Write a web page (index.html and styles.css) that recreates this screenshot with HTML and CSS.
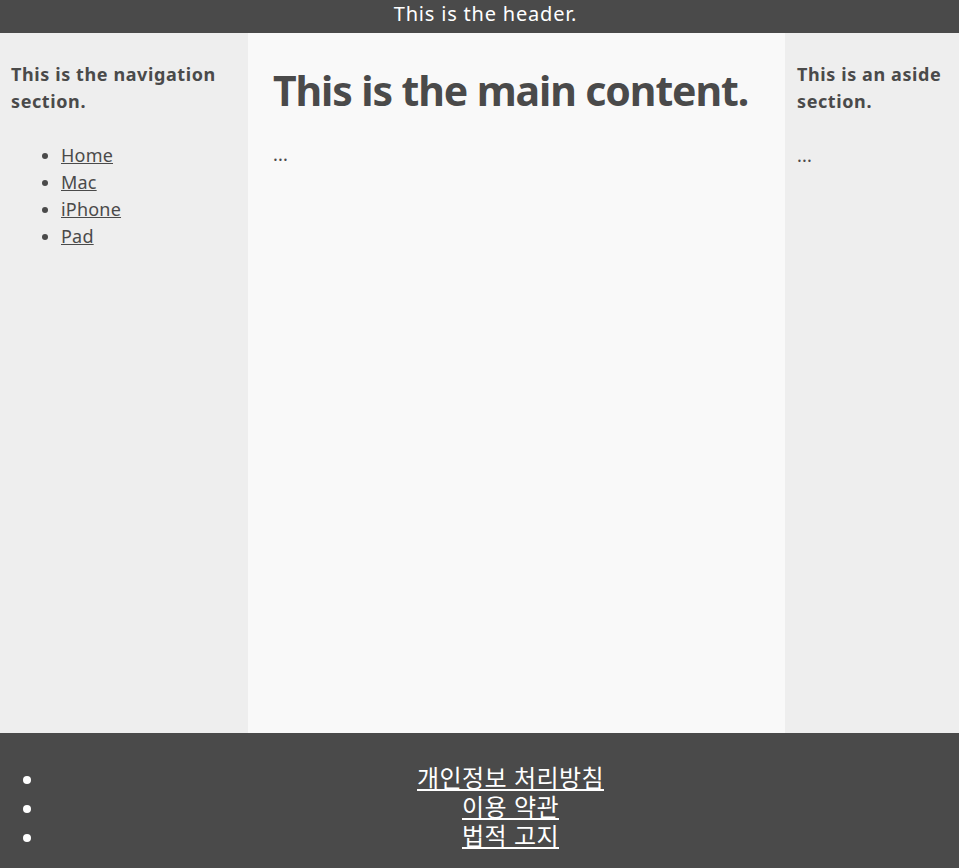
FILE: index.html
```html
<!DOCTYPE html>
<html lang="ko">
<head>
<meta charset="utf-8">
<title>Layout</title>
<link rel="stylesheet" href="styles.css">
</head>
<body>
<header class="site-header">This is the header.</header>
<div class="columns">
  <nav class="side nav">
    <h3 class="side-title">This is the navigation section.</h3>
    <ul class="nav-list">
      <li><a href="#">Home</a></li>
      <li><a href="#">Mac</a></li>
      <li><a href="#">iPhone</a></li>
      <li><a href="#">Pad</a></li>
    </ul>
  </nav>
  <main class="main">
    <h1 class="main-title">This is the main content.</h1>
    <p class="text">...</p>
  </main>
  <aside class="side aside">
    <h3 class="side-title">This is an aside section.</h3>
    <p class="text">...</p>
  </aside>
</div>
<footer class="site-footer">
  <ul class="footer-list">
    <li><a href="#">개인정보 처리방침</a></li>
    <li><a href="#">이용 약관</a></li>
    <li><a href="#">법적 고지</a></li>
  </ul>
</footer>
</body>
</html>
```
FILE: styles.css
```css
* { box-sizing: border-box; }
html, body { margin: 0; padding: 0; }
body {
  font-family: "Noto Sans", "Noto Sans CJK KR", sans-serif;
  font-size: 18px;
  line-height: 27px;
  color: #4a4a4a;
  background: #4a4a4a;
  letter-spacing: 0.2px;
}
.site-header {
  height: 33px;
  background: #4a4a4a;
  color: #fff;
  text-align: center;
  font-size: 20px;
  line-height: 27px;
  letter-spacing: 0.8px;
  padding-left: 12px;
}
.columns {
  display: flex;
  height: 700px;
}
.side {
  background: #eeeeee;
  padding: 0 11px;
}
.nav { width: 248px; }
.aside { width: 174px; padding: 0 12px; }
.main {
  flex: 1;
  background: #f9f9f9;
  padding: 0 25px;
}
.side-title {
  margin: 28px 0 27px;
  font-size: 18px;
  line-height: 27px;
  font-weight: bold;
  letter-spacing: 0.6px;
}
.nav-list {
  margin: 0;
  padding-left: 50px;
}
.nav-list a { color: #4a4a4a; }
.main-title {
  margin: 27px 0 21px;
  font-size: 41px;
  line-height: 60px;
  font-weight: bold;
  letter-spacing: -1.1px;
  white-space: nowrap;
}
.text { margin: 0; }
.site-footer {
  height: 135px;
  background: #4a4a4a;
  color: #fff;
  padding-top: 29px;
  overflow: hidden;
}
.footer-list {
  margin: 0;
  padding-left: 45px;
  text-align: center;
  font-family: "Noto Sans CJK KR", sans-serif;
  font-size: 24px;
  line-height: 29px;
  letter-spacing: 0.4px;
}
.footer-list li { margin-right: -17px; height: 29px; }
.footer-list li::marker { font-size: 20px; }
.footer-list a {
  color: #fff;
  display: inline-block;
  height: 29px;
  line-height: 29px;
  vertical-align: top;
}
```
